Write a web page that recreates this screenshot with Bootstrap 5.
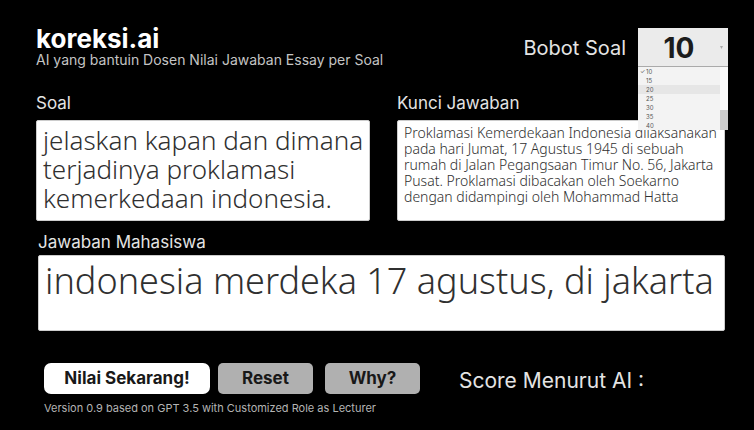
<!DOCTYPE html>
<html lang="id">
<head>
<meta charset="utf-8">
<meta name="viewport" content="width=device-width, initial-scale=1">
<title>koreksi.ai</title>
<link href="https://cdn.jsdelivr.net/npm/bootstrap@5.3.0/dist/css/bootstrap.min.css" rel="stylesheet">
<style>
body { background: #000; color: #e4e4e4; font-family: Inter, "Liberation Sans", sans-serif; }
.page { padding: 26px 29px 12px 36px; }
.top-bar { margin-right: -3px; height: 68px; }
.brand { font-size: 26px; line-height: 26px; font-weight: 700; color: #fff; }
.tagline { font-size: 14px; line-height: 16px; color: #c4c4c4; }
.weight-label { font-size: 20px; line-height: 44px; }
.weight-box { width: 90px; margin-top: 2px; }
.weight-select { appearance: none; height: 39px; width: 100%; border: 0; border-bottom: 1px solid #aaa; background: #ebebeb; color: #1c1c1c; font-size: 28px; line-height: 36px; font-weight: 700; padding: 2px 8px 0 0; text-align: center; text-align-last: center; }
.arrow { right: 5px; top: 18px; width: 3px; height: 3px; background: #aaa; clip-path: polygon(0 0, 100% 0, 50% 100%); }
.options { left: 0; top: 39px; width: 100%; z-index: 2; background: #f3f3f3; border-right: 8px solid #fafafa; }
.options li { font-size: 6px; line-height: 9px; height: 9px; padding-left: 8px; color: #555; }
.options li.hovered { background: #e6e6e6; }
.options li[aria-selected="true"]::before { content: "✓"; float: left; margin-left: -6px; }
.options li.thumb { right: -8px; bottom: 0; width: 8px; height: 20px; background: #ccc; }
.field-label { font-size: 17px; line-height: 18px; display: block; }
.pair { display: grid; grid-template-columns: 334fr 328fr; gap: 27px; }
.answer-box { display: block; width: 100%; border: 1px solid #ccc; border-radius: 2px; background: #fff; color: #303030; font-family: "Noto Sans", "Open Sans", sans-serif; font-weight: 300; resize: none; overflow: hidden; }
.question { height: 101px; font-size: 26px; line-height: 29px; padding: 5px 0 0 6px; }
.key { height: 101px; font-size: 14px; line-height: 16px; padding: 4px 0 0 6px; }
.student-group { padding-left: 2px; }
.student { height: 76px; font-size: 36px; line-height: 48px; padding: 1px 0 0 6px; }
.action { height: 31px; border: 0; border-radius: 5px; font-size: 17px; line-height: 31px; font-weight: 700; padding: 0; width: 95px; background: #b0b0b0; color: #181818; }
.action.primary { width: 166px; background: #fff; border-radius: 7px; }
.score { font-size: 21px; line-height: 36px; padding-left: 7px; }
.version { font-size: 11px; line-height: 18px; color: #b4b4b4; }
</style>
<script src="https://cdn.jsdelivr.net/npm/bootstrap@5.3.0/dist/js/bootstrap.bundle.min.js"></script>
</head>
<body>
<main class="page">
  <header class="top-bar d-flex justify-content-between align-items-start">
    <div>
      <h1 class="brand mb-0">koreksi.ai</h1>
      <p class="tagline mb-0">AI yang bantuin Dosen Nilai Jawaban Essay per Soal</p>
    </div>
    <div class="d-flex gap-2">
      <label class="weight-label pe-1" for="weight">Bobot Soal</label>
      <div class="weight-box position-relative">
        <select class="weight-select rounded-0" id="weight"><option>10</option><option>15</option><option>20</option><option>25</option><option>30</option><option>35</option><option>40</option></select>
        <span class="arrow position-absolute"></span>
        <ul class="options position-absolute list-unstyled mb-0" role="listbox" aria-label="Bobot Soal">
          <li role="option" aria-selected="true">10</li>
          <li role="option">15</li>
          <li role="option" class="hovered">20</li>
          <li role="option">25</li>
          <li role="option">30</li>
          <li role="option">35</li>
          <li role="option">40</li>
          <li class="thumb position-absolute p-0" role="presentation"></li>
        </ul>
      </div>
    </div>
  </header>
  <section class="pair">
    <div>
      <label class="field-label mb-2" for="question">Soal</label>
      <textarea class="answer-box question" id="question" spellcheck="false">jelaskan kapan dan dimana terjadinya proklamasi kemerkedaan indonesia.</textarea>
    </div>
    <div>
      <label class="field-label mb-2" for="key">Kunci Jawaban</label>
      <textarea class="answer-box key" id="key" spellcheck="false">Proklamasi Kemerdekaan Indonesia dilaksanakan pada hari Jumat, 17 Agustus 1945 di sebuah rumah di Jalan Pegangsaan Timur No. 56, Jakarta Pusat. Proklamasi dibacakan oleh Soekarno dengan didampingi oleh Mohammad Hatta</textarea>
    </div>
  </section>
  <section class="student-group pt-2 mt-1">
    <label class="field-label mb-1" for="student">Jawaban Mahasiswa</label>
    <textarea class="answer-box student" id="student" spellcheck="false">indonesia merdeka 17 agustus, di jakarta</textarea>
  </section>
  <section class="d-flex gap-2 pt-4 mt-2 ps-2">
    <button class="action primary" type="button">Nilai Sekarang!</button>
    <button class="action me-1" type="button">Reset</button>
    <button class="action" type="button">Why?</button>
    <output class="score ms-4">Score Menurut AI :</output>
  </section>
  <p class="version ps-2 mb-0">Version 0.9 based on GPT 3.5 with Customized Role as Lecturer</p>
</main>
</body>
</html>
